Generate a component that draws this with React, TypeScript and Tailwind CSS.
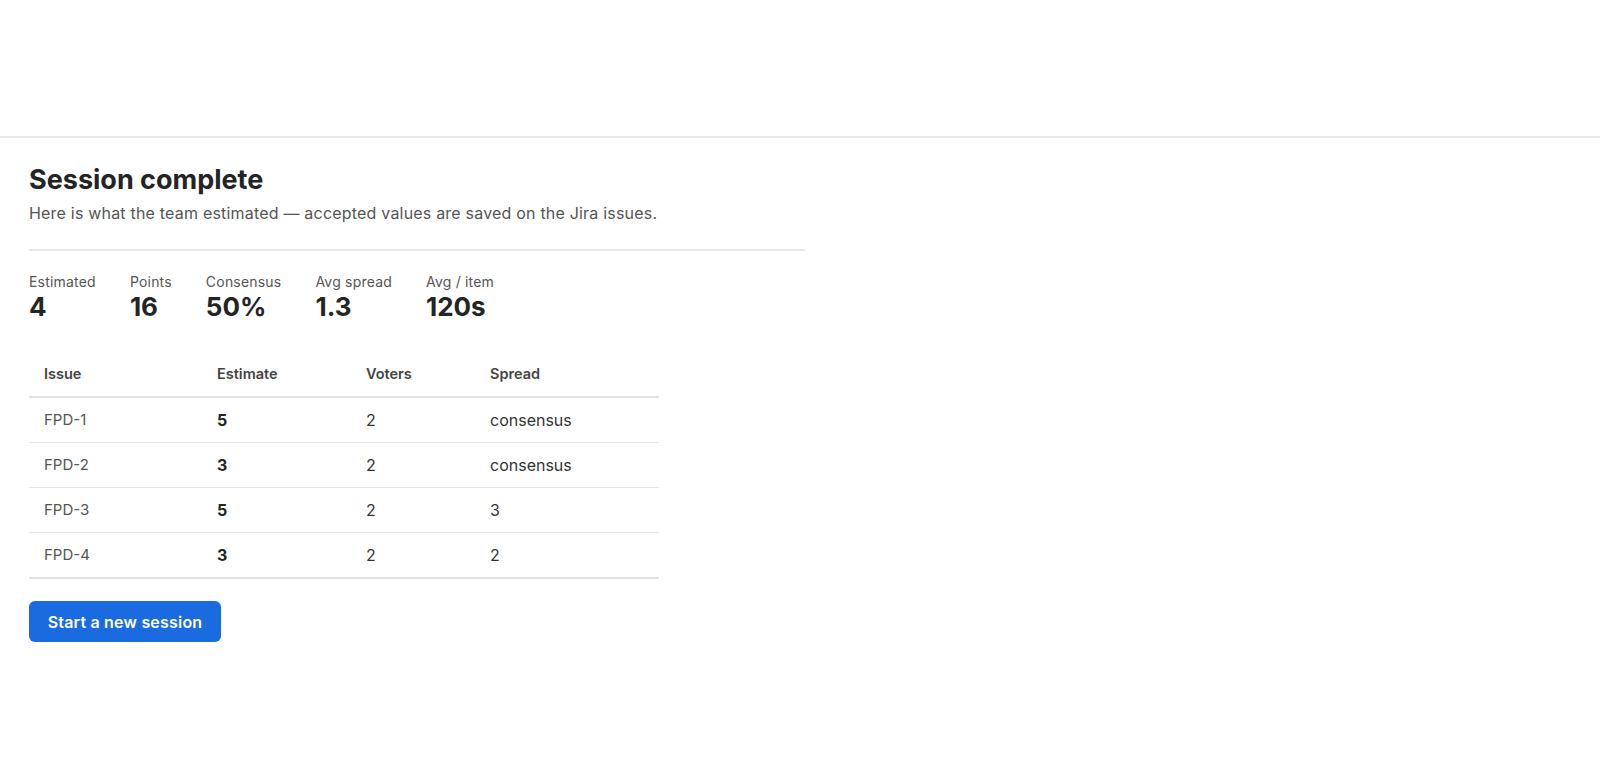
import { Fragment } from "react";

interface Row {
  issue: string;
  estimate: number;
  voters: number;
  spread: string;
}

const stats = [
  { label: "Estimated", value: "4" },
  { label: "Points", value: "16" },
  { label: "Consensus", value: "50%" },
  { label: "Avg spread", value: "1.3" },
  { label: "Avg / item", value: "120s" },
];

const rows: Row[] = [
  { issue: "FPD-1", estimate: 5, voters: 2, spread: "consensus" },
  { issue: "FPD-2", estimate: 3, voters: 2, spread: "consensus" },
  { issue: "FPD-3", estimate: 5, voters: 2, spread: "3" },
  { issue: "FPD-4", estimate: 3, voters: 2, spread: "2" },
];

export default function App() {
  return (
    <div className="min-h-screen bg-white font-['Inter','Noto_Sans',sans-serif] text-[#222]">
      {/* empty app bar */}
      <div className="h-[138px] border-b-2 border-[#e8e8e8]" />

      <main className="px-[29px] pt-[25px]">
        <div className="w-[776px]">
          <h1 className="text-[27px] leading-[33px] font-bold text-[#242424]">Session complete</h1>
          <p className="mt-[7px] text-[16px] leading-[20px] tracking-[0.2px] text-[#555]">
            Here is what the team estimated — accepted values are saved on the Jira issues.
          </p>

          <div className="mt-[26px] border-t-2 border-[#e8e8e8]" />

          <div className="mt-[22px] flex gap-[34px]">
            {stats.map((s) => (
              <div key={s.label} className="flex flex-col">
                <span className="text-[14px] leading-[17px] tracking-[0.2px] text-[#555]">{s.label}</span>
                <span className="mt-[2px] text-[26px] leading-[30px] font-bold text-[#242424]">{s.value}</span>
              </div>
            ))}
          </div>
        </div>

        <table className="mt-[30px] w-[630px] table-fixed border-collapse">
          <colgroup>
            <col className="w-[173px]" />
            <col className="w-[149px]" />
            <col className="w-[124px]" />
            <col />
          </colgroup>
          <thead>
            <tr className="border-b-2 border-[#e3e3e3]">
              {["Issue", "Estimate", "Voters", "Spread"].map((h) => (
                <th key={h} className="py-3 pl-[15px] text-left text-[14.5px] leading-[20px] font-semibold text-[#444]">
                  {h}
                </th>
              ))}
            </tr>
          </thead>
          <tbody>
            {rows.map((r, i) => (
              <Fragment key={r.issue}>
                <tr className={i === rows.length - 1 ? "border-b-2 border-[#e3e3e3]" : "border-b border-[#e6e6e6]"}>
                  <td className="py-3 pl-[15px] text-[15px] leading-[20px] text-[#555]">{r.issue}</td>
                  <td className="py-3 pl-[15px] text-[16px] leading-[20px] font-bold text-[#242424]">{r.estimate}</td>
                  <td className="py-3 pl-[15px] text-[16px] leading-[20px] text-[#333]">{r.voters}</td>
                  <td className="py-3 pl-[15px] text-[16px] leading-[20px] text-[#333]">{r.spread}</td>
                </tr>
              </Fragment>
            ))}
          </tbody>
        </table>

        <button className="mt-[22px] h-[41px] w-[192px] rounded-md bg-[#1a6be0] text-[16px] tracking-[0.2px] font-semibold text-white">
          Start a new session
        </button>
      </main>
    </div>
  );
}
